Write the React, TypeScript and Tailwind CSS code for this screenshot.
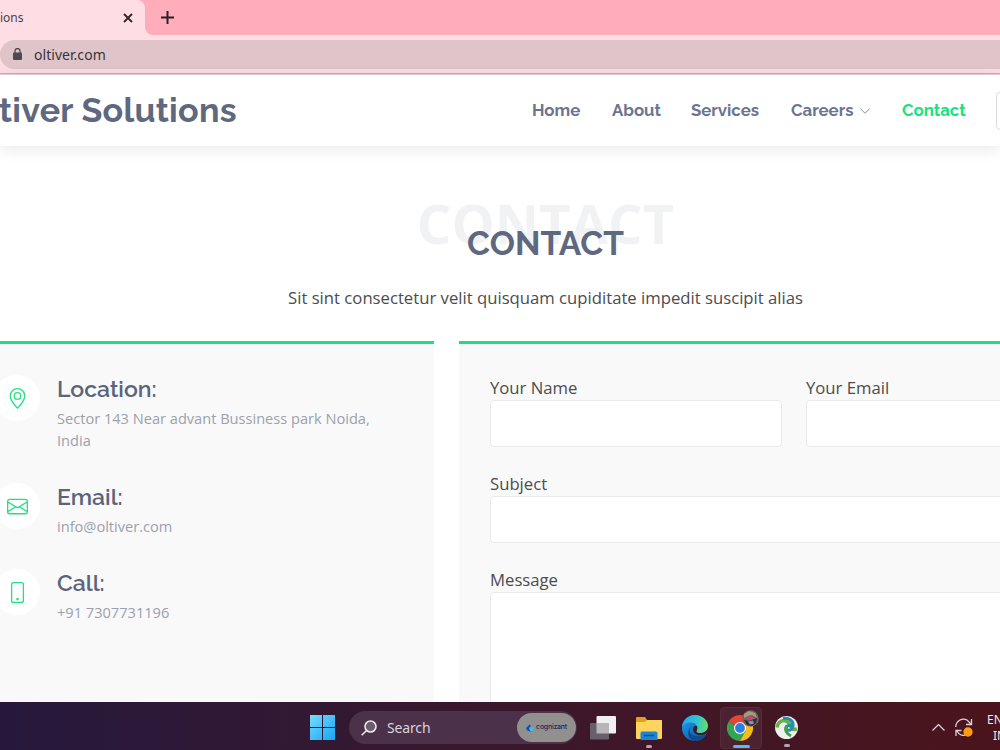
import type { ReactNode } from 'react';
import { BsChevronDown, BsEnvelope, BsGeoAlt, BsPhone } from 'react-icons/bs';

const heading = "font-['Raleway','Lato',sans-serif]";

function BrowserBar() {
  return (
    <div className="h-[75px] shrink-0 border-b border-[#ecd3da] bg-[#ffdde4] font-['Noto_Sans',sans-serif]">
      <div className="flex h-[35px] bg-[#ffdde4]">
        <div className="flex bg-[#ffacbb]">
          <div className="flex h-full w-[145px] items-center justify-between rounded-tr-lg bg-[#ffdde4] pr-3">
            <span className="pt-px text-[12px] text-[#4b4448]">ions</span>
            <svg className="size-[10px]" viewBox="0 0 10 10" stroke="#2d2529" strokeWidth="1.800">
              <path d="M1 1l8 8M9 1L1 9" />
            </svg>
          </div>
        </div>
        <div className="flex flex-1 items-center rounded-bl-lg bg-[#ffacbb] pl-4">
          <svg className="size-[13px]" viewBox="0 0 13 13" stroke="#2d2025" strokeWidth="2">
            <path d="M6.5 0v13M0 6.5h13" />
          </svg>
        </div>
      </div>
      <div className="flex h-[39px] items-center border-b border-[#c9abb7]">
        <div className="flex h-[29px] w-full items-center gap-[12px] rounded-l-full bg-[#dfc5ca] pl-[13px]">
          <svg className="h-[12px] w-[9px]" viewBox="0 0 9 12">
            <rect y="4.500" width="9" height="7.500" rx="1" fill="#4c4a4e" />
            <path d="M2 5V3a2.500 2.500 0 0 1 5 0v2" fill="none" stroke="#4c4a4e" strokeWidth="1.300" />
          </svg>
          <span className="text-[14px] tracking-[0.04px] text-[#393438]">oltiver.com</span>
        </div>
      </div>
    </div>
  );
}

function SiteHeader() {
  return (
    <header className={`${heading} z-10 flex h-[71px] shrink-0 items-center bg-white font-bold text-[#6b7590] shadow-[0_2px_15px_rgba(0,0,0,0.1)]`}>
      <h1 className="-ml-px w-[533px] text-[34px] tracking-[0.28px] text-[#5e687e]">tiver Solutions</h1>
      <nav className="flex flex-1 items-center text-[16.8px] whitespace-nowrap">
        <a className="w-[80px]">Home</a>
        <a className="w-[79px]">About</a>
        <a className="w-[100px]">Services</a>
        <a className="flex w-[111px] items-center gap-[6px]">
          <span className="w-[62px]">Careers</span>
          <BsChevronDown className="size-[12px] text-[#8a92a5]" />
        </a>
        <a className="w-[94px] text-[#17e37d]">Contact</a>
        <span className="-mr-4 h-[38px] w-5 shrink-0 rounded border border-[#d9dce1]" />
      </nav>
    </header>
  );
}

function InfoItem({ icon, title, className, children }: { icon: ReactNode; title: string; className: string; children: ReactNode }) {
  return (
    <div className={`-ml-1.5 flex gap-[17px] ${className}`}>
      <div className="flex size-[46px] shrink-0 items-center justify-center rounded-full bg-white text-[21px] text-[#27df82]">{icon}</div>
      <div>
        <h4 className={`${heading} text-[23px] leading-[28px] font-semibold text-[#5c647b]`}>{title}</h4>
        <p className="mt-1 text-[14.6px] leading-[22px] text-[#9ba1ac]">{children}</p>
      </div>
    </div>
  );
}

function Field({ label, className, box }: { label: string; className: string; box: string }) {
  return (
    <label className={`block shrink-0 text-[16.7px] leading-6 text-[#4c4c4c] ${className}`}>
      {label}
      <span className={`block rounded border border-[#e9eaeb] bg-white ${box}`} />
    </label>
  );
}

function Contact() {
  return (
    <main className="flex min-h-0 flex-1 flex-col bg-white font-['Open_Sans',sans-serif]">
      <div className="relative h-[195px] w-[1091px] shrink-0 text-center">
        <div className="absolute inset-x-0 top-[39px] text-[54.4px] leading-[76px] font-bold text-[#f1f2f3]">CONTACT</div>
        <h2 className={`${heading} relative pt-[77px] text-[33.4px] leading-[42px] font-bold text-[#5e687e]`}>CONTACT</h2>
        <p className="relative pt-[20px] text-[16.7px] leading-[26px] text-[#4c4c4c]">
          Sit sint consectetur velit quisquam cupiditate impedit suscipit alias
        </p>
      </div>
      <div className="flex min-h-0 flex-1 gap-[25px]">
        <section className="w-[434px] shrink-0 border-t-[3px] border-[#1be07d] bg-[#f9f9f9] pt-[31px]">
          <InfoItem icon={<BsGeoAlt />} title="Location:" className="h-[108px]">
            Sector 143 Near advant Bussiness park Noida,
            <br />
            India
          </InfoItem>
          <InfoItem icon={<BsEnvelope />} title="Email:" className="h-[86px]">info@oltiver.com</InfoItem>
          <InfoItem icon={<BsPhone />} title="Call:" className="h-[86px]">+91 7307731196</InfoItem>
        </section>
        <section className="w-[670px] shrink-0 border-t-[3px] border-[#1be07d] bg-[#f9f9f9] px-[31px] pt-[32px]">
          <div className="flex gap-6">
            <Field label="Your Name" className="w-[292px]" box="h-[47px]" />
            <Field label="Your Email" className="w-[292px]" box="h-[47px]" />
          </div>
          <Field label="Subject" className="mt-[25px]" box="h-[47px]" />
          <Field label="Message" className="mt-[25px]" box="h-[240px]" />
        </section>
      </div>
    </main>
  );
}

function WindowsLogo() {
  return (
    <svg className="size-[25px] shrink-0" viewBox="0 0 25 25">
      <defs>
        <linearGradient id="win" x1="0" y1="0" x2="25" y2="25" gradientUnits="userSpaceOnUse">
          <stop stopColor="#78dcfb" />
          <stop offset="1" stopColor="#15a4f4" />
        </linearGradient>
      </defs>
      <path fill="url(#win)" d="M0 0h12v12H0zM13 0h12v12H13zM0 13h12v12H0zM13 13h12v12H13z" />
    </svg>
  );
}

function CognizantMark() {
  return (
    <svg className="size-2" viewBox="0 0 8 8">
      <path fill="#174bbb" d="M0 4L3.500 .5 5 2 3 4l3 3.500Q1 8 0 4z" />
      <path fill="#35c3e8" d="M3 4.500l5-1.500Q8 7 4.500 7.500z" />
    </svg>
  );
}

function TaskViewIcon() {
  return (
    <svg className="h-6 w-[26px]" viewBox="0 0 26 24">
      <rect x="6.500" width="19.500" height="17.500" rx="1" fill="#f1eff1" />
      <rect y="7" width="19" height="16.500" rx="1" fill="#66606a" />
      <path fill="#b9b5ba" d="M6.500 7H19v10.500H6.500z" />
    </svg>
  );
}

function FolderIcon() {
  return (
    <svg className="h-6 w-[26px]" viewBox="0 0 26 24">
      <path fill="#dfa11b" d="M0 2Q0 1 1 1h8l2 3h14q1 0 1 1v6H0z" />
      <path fill="#ffd45b" d="M0 6h9l2-2h14q1 0 1 1v17q0 1-1 1H1q-1 0-1-1z" />
      <path fill="#1b84d6" d="M4.500 24v-7q0-1.500 1.500-1.500h14q1.500 0 1.500 1.500v7z" />
      <path stroke="#0b518d" strokeWidth="1.500" d="M8 19.500h10" />
    </svg>
  );
}

function EdgeIcon() {
  return (
    <svg className="size-[26px]" viewBox="0 0 26 26">
      <defs>
        <linearGradient id="edgeTop" x1="1" y1="8" x2="26" y2="12" gradientUnits="userSpaceOnUse">
          <stop stopColor="#26a9eb" />
          <stop offset=".5" stopColor="#2fc3d7" />
          <stop offset="1" stopColor="#65df63" />
        </linearGradient>
        <linearGradient id="edgeSide" x1="0" y1="8" x2="16" y2="25" gradientUnits="userSpaceOnUse">
          <stop stopColor="#1998e4" />
          <stop offset="1" stopColor="#0c59a8" />
        </linearGradient>
      </defs>
      <circle cx="13" cy="13" r="13" fill="url(#edgeSide)" />
      <path fill="#104a91" d="M9 12c-4 6 2 12 15 8-3 4-7 6-11 6-7-1-9-10-4-14z" />
      <path fill="#3d1828" d="M12.500 11c-3.500 4 0 9 6 9 2.500 0 5-.8 6.500-2.200L27 12l-5-2z" />
      <path fill="url(#edgeTop)" d="M0 12C1 4 7 0 13 0c7 0 13 5 13 11 0 4.500-4 7-8 7-3.500 0-4-1.200-3-3 1.500-3-1-7.500-6-7.500-4.500 0-7.500 2-9 4.500z" />
    </svg>
  );
}

function ChromeIcon() {
  return (
    <svg className="h-[31px] w-8" viewBox="0 0 32 31">
      <path fill="#e94335" d="M13 18L1.700 11.500A13 13 0 0 1 24.300 11.500z" />
      <path fill="#34a353" d="M13 18l-11.300-6.500A13 13 0 0 0 13 31l6-9z" />
      <path fill="#fbbc17" d="M13 18l11.300-6.500A13 13 0 0 1 13 31l5.600-10z" />
      <path fill="#e94335" d="M13 12h11.500l-1-2H12z" />
      <circle cx="13" cy="18" r="6" fill="#fff" />
      <circle cx="13" cy="18" r="4.900" fill="#2b7de9" />
      <circle cx="23.500" cy="8.500" r="8.300" fill="#6e6658" />
      <path fill="#a49c7c" d="M17 4l5-3 6 2 2 5-5-3-4 1-4 2z" />
      <path fill="#b84a6e" d="M19 8l4-3 5 3-1 4-6-2z" />
      <path fill="#332b3b" d="M17 10l5 1 5-2 3-1-1 5-4 3-5-1z" />
      <path fill="#8194c0" d="M21 11.500l5-1 1 3-4 1z" />
    </svg>
  );
}

function GlobeIcon() {
  return (
    <svg className="size-[23px]" viewBox="0 0 23 23" fill="none">
      <circle cx="11.500" cy="11.500" r="11.500" fill="#eef0ec" />
      <path stroke="#63b345" strokeWidth="3.500" d="M2 11.500C3 5 9 2.500 13.500 6.500 18 11 14 15 22 13" />
      <path stroke="#258db1" strokeWidth="3" d="M8 2.500c6-1 11 2.500 10 8-1 4-5 5-7 2 0-3 3-4 6-2" />
      <path stroke="#479d50" strokeWidth="3" d="M11.500 10c-2 4 0 7.500 4.500 10" />
    </svg>
  );
}

function Taskbar() {
  return (
    <footer className="flex h-12 shrink-0 items-center bg-linear-to-r from-[#26183d] via-[#3a172c] to-[#4b141c] pt-[3px] pl-[310px] font-['Noto_Sans',sans-serif]">
      <WindowsLogo />
      <div className="ml-[14px] flex h-[33px] w-[228px] shrink-0 items-center rounded-full bg-[#4b3149] pl-3">
        <svg className="size-[16px] shrink-0" viewBox="0 0 16 16" fill="#6d5b70" stroke="#eee7ee" strokeWidth="1.600">
          <circle cx="9.500" cy="6.500" r="5.500" />
          <path d="M5.500 10.500L.7 15.300" />
        </svg>
        <span className="ml-[10px] flex-1 text-[14px] tracking-[-0.15px] text-[#dcd2dd]">Search</span>
        <div className="mr-px flex h-[29px] w-[59px] items-center justify-center gap-[2px] rounded-full bg-[#92908f] text-[#292650]">
          <CognizantMark />
          <span className="font-['Inter',sans-serif] text-[7px] font-medium tracking-[-0.25px]">cognizant</span>
        </div>
      </div>
      <div className="ml-[13px] flex h-full shrink-0 items-center">
        <TaskViewIcon />
        <div className="relative ml-5">
          <FolderIcon />
          <span className="absolute -bottom-2 left-[10px] h-[3px] w-[6px] rounded-full bg-[#b4a5ad]" />
        </div>
        <div className="ml-5"><EdgeIcon /></div>
        <div className="relative ml-3 flex h-[42px] w-[42px] items-center justify-center rounded border border-[#542c3b] bg-[#4b2230] pb-1 pl-1">
          <ChromeIcon />
          <span className="absolute bottom-0 left-[12px] h-[3px] w-[17px] rounded-full bg-[#55bdf4]" />
        </div>
        <div className="relative ml-[13px]">
          <GlobeIcon />
          <span className="absolute -bottom-2 left-[9px] h-[3px] w-[6px] rounded-full bg-[#b4a5ad]" />
        </div>
      </div>
      <div className="ml-[134px] flex shrink-0 items-center">
        <svg className="h-[7px] w-[13px]" viewBox="0 0 13 7" fill="none" stroke="#e2d7dc" strokeWidth="1.200"><path d="M.5 6.500l6-6 6 6" /></svg>
        <svg className="ml-[10px] h-[19px] w-[18px]" viewBox="0 0 18 19" fill="none" stroke="#dfd2d7" strokeWidth="1.300">
          <path d="M.7 9C1 3 7-.5 12 2l4 4M16.500 1v5.500H11M1 18v-5.500h5.500M2 13c2 4 6 5 9 4" />
          <circle cx="13" cy="14" r="4" fill="#ff9d12" stroke="#ff9d12" />
        </svg>
        <div className="ml-[14px] w-7 shrink-0 text-[12px] leading-[16px] whitespace-nowrap text-[#eee7ea]">
          <div>ENG</div>
          <div className="pl-[6px]">IN</div>
        </div>
      </div>
    </footer>
  );
}

export default function App() {
  return (
    <div className="flex h-[750px] w-[1000px] flex-col overflow-hidden bg-white">
      <BrowserBar />
      <SiteHeader />
      <Contact />
      <Taskbar />
    </div>
  );
}
